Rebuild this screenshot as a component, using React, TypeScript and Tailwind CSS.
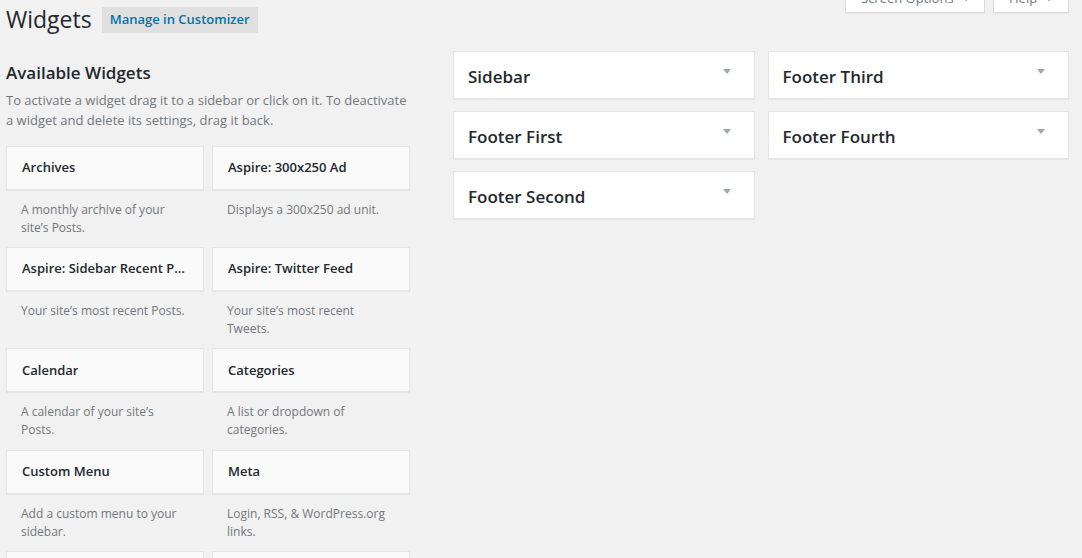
import React from 'react'

const widgets = [
    { title: 'Archives', desc: 'A monthly archive of your site’s Posts.' },
    { title: 'Aspire: 300x250 Ad', desc: 'Displays a 300x250 ad unit.' },
    { title: 'Aspire: Sidebar Recent Posts', desc: 'Your site’s most recent Posts.' },
    { title: 'Aspire: Twitter Feed', desc: 'Your site’s most recent Tweets.' },
    { title: 'Calendar', desc: 'A calendar of your site’s Posts.' },
    { title: 'Categories', desc: 'A list or dropdown of categories.' },
    { title: 'Custom Menu', desc: 'Add a custom menu to your sidebar.' },
    { title: 'Meta', desc: 'Login, RSS, & WordPress.org links.' },
    { title: 'Pages', desc: 'A list of your site’s Pages.' },
    { title: 'Recent Comments', desc: 'Your site’s most recent comments.' },
]

const sidebarsLeft = ['Sidebar', 'Footer First', 'Footer Second']
const sidebarsRight = ['Footer Third', 'Footer Fourth']

function Arrow({ className }: { className?: string }) {
    return (
        <svg width="8" height="5" viewBox="0 0 8 5" className={className}>
            <polygon points="0,0 8,0 4,5" fill="#a0a5aa" />
        </svg>
    )
}

function SidebarBox({ name }: { name: string }) {
    return (
        <div className="flex h-[48px] items-start justify-between border border-[#e5e5e5] bg-white pl-[14px] pr-[23px] shadow-[0_1px_1px_rgba(0,0,0,0.04)]">
            <h3 className="mt-[13px] text-[17px] font-semibold leading-[24px] text-[#23282d]">{name}</h3>
            <Arrow className="mt-[17px]" />
        </div>
    )
}

export default function App() {
    return (
        <div className="h-screen overflow-hidden bg-[#f1f1f1] font-['Open_Sans',sans-serif] text-[#23282d]">
            {/* header */}
            <div className="flex items-start justify-between pl-[6px] pr-[13px] pt-[4px]">
                <div className="flex items-start gap-[10px]">
                    <h1 className="text-[23px] font-normal leading-[30px] text-[#23282d]">Widgets</h1>
                    <button className="mt-[3px] h-[26px] bg-[#e0e0e0] px-[8px] text-[13px] font-semibold text-[#0073aa]">
                        Manage in Customizer
                    </button>
                </div>
                <div className="-mt-[19px] flex gap-[8px]">
                    <button className="flex h-[28px] w-[140px] items-center border border-[#ddd] bg-white pl-[15px] text-[13px] text-[#72777c] shadow-[0_1px_1px_rgba(0,0,0,0.04)]">
                        Screen Options
                        <Arrow className="ml-[8px] scale-75" />
                    </button>
                    <button className="flex h-[28px] w-[76px] items-center border border-[#ddd] bg-white pl-[15px] text-[13px] text-[#72777c] shadow-[0_1px_1px_rgba(0,0,0,0.04)]">
                        Help
                        <Arrow className="ml-[8px] scale-75" />
                    </button>
                </div>
            </div>

            {/* main */}
            <div className="flex pl-[6px]">
                <div className="w-[404px] shrink-0">
                    <h2 className="mt-[27px] text-[17px] font-semibold leading-[24px]">Available Widgets</h2>
                    <p className="mt-[6px] text-[13px] leading-[19.5px] text-[#72777c]">
                        To activate a widget drag it to a sidebar or click on it. To deactivate a widget and delete its settings, drag it back.
                    </p>
                    <div className="mt-[16px] grid grid-cols-2 gap-x-[8px]">
                        {widgets.map((w) => (
                            <div key={w.title} className="h-[101.2px]">
                                <div className="flex h-[44px] items-center border border-[#e5e5e5] bg-[#fafafa] px-[15px] shadow-[0_1px_1px_rgba(0,0,0,0.04)]">
                                    <h3 className="truncate text-[13px] font-semibold">{w.title}</h3>
                                </div>
                                <p className="pl-[15px] pr-[17px] pt-[11px] text-[12px] leading-[18px] text-[#72777c]">{w.desc}</p>
                            </div>
                        ))}
                    </div>
                </div>

                <div className="ml-[43px] mt-[17px] grid w-[616px] grid-cols-2 items-start gap-x-[13px]">
                    <div className="flex flex-col gap-[12px]">
                        {sidebarsLeft.map((s) => (
                            <SidebarBox key={s} name={s} />
                        ))}
                    </div>
                    <div className="flex flex-col gap-[12px]">
                        {sidebarsRight.map((s) => (
                            <SidebarBox key={s} name={s} />
                        ))}
                    </div>
                </div>
            </div>
        </div>
    )
}
